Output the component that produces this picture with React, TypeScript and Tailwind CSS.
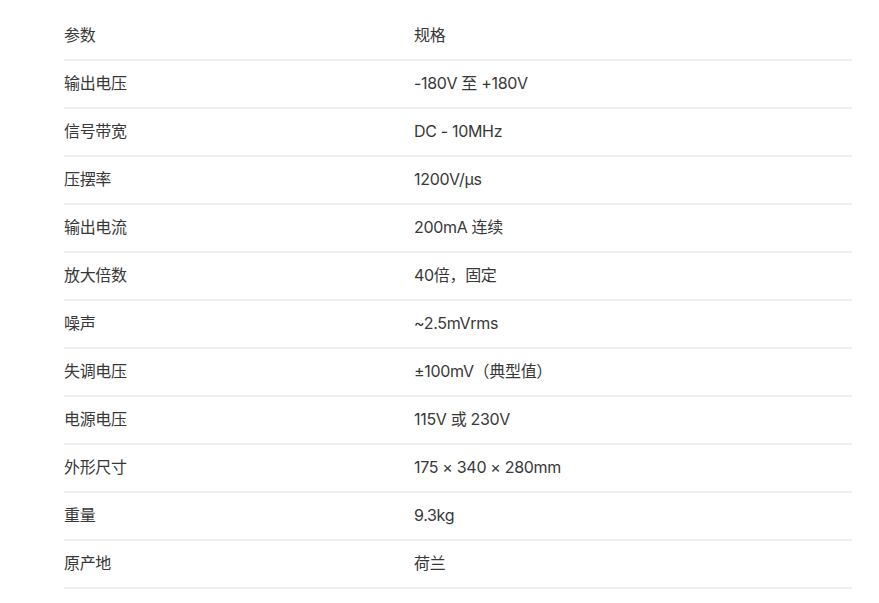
import React from "react";

const rows: [string, string][] = [
  ["参数", "规格"],
  ["输出电压", "-180V 至 +180V"],
  ["信号带宽", "DC - 10MHz"],
  ["压摆率", "1200V/µs"],
  ["输出电流", "200mA 连续"],
  ["放大倍数", "40倍，固定"],
  ["噪声", "~2.5mVrms"],
  ["失调电压", "±100mV（典型值）"],
  ["电源电压", "115V 或 230V"],
  ["外形尺寸", "175 × 340 × 280mm"],
  ["重量", "9.3kg"],
  ["原产地", "荷兰"],
];

export default function App() {
  return (
    <div
      className="min-h-[603px] w-[879px] bg-white pt-[13px]"
      style={{ fontFamily: 'Inter, "Noto Sans CJK SC", sans-serif' }}
    >
      <div className="ml-[64px] w-[788px]">
        {rows.map(([k, v], i) => (
          <div
            key={i}
            className="grid h-12 grid-cols-[350px_1fr] items-center border-b-2 border-[#f0f0f0] pb-[2px] text-[16px] tracking-[-0.02em] text-[#383838]"
          >
            <div>{k}</div>
            <div>{v}</div>
          </div>
        ))}
      </div>
    </div>
  );
}
